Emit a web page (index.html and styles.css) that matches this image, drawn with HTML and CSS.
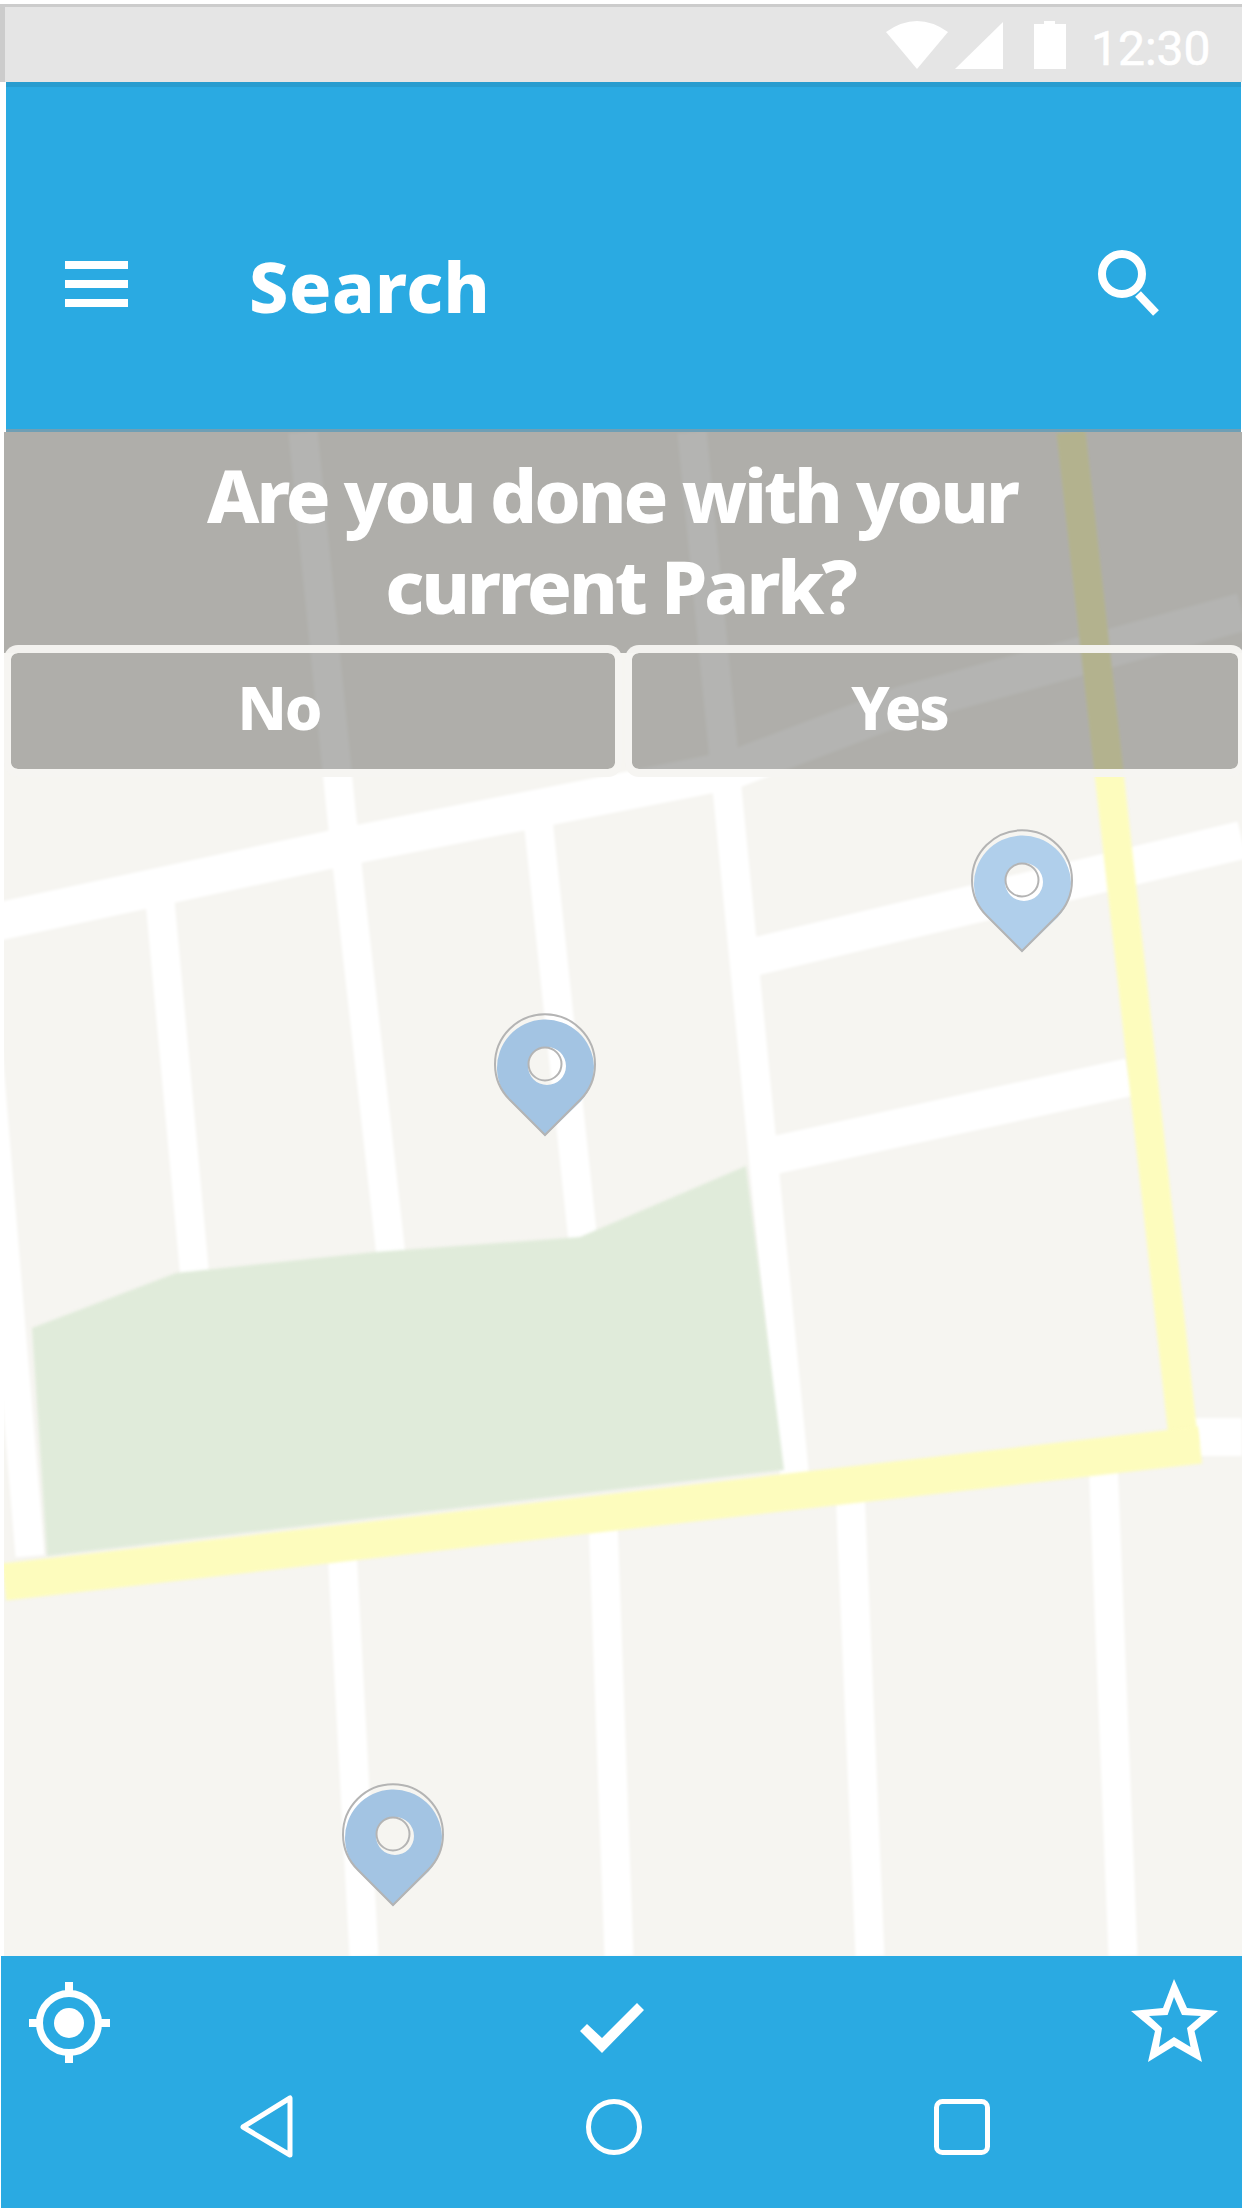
FILE: index.html
```html
<!DOCTYPE html>
<html lang="en">
  <head>
    <meta charset="UTF-8" />
    <meta name="viewport" content="width=device-width, initial-scale=1.0" />
    <title>Search</title>
    <link rel="stylesheet" href="styles.css">
  </head>

  <body>
    <div id="statusBar">
      <svg class="statusIcons" viewBox="886 21 180 48">
        <path d="M917 69 L886 32 Q917 10 948 32 Z" />
        <path d="M955 69 L1003 22 V69 Z" />
        <path d="M1034 24 H1044 V21 H1055 V24 H1066 V69 H1034 Z" />
      </svg>
      <span class="clock">12:30</span>
    </div>

    <header id="appBar">
      <div class="hamburger"><i></i><i></i><i></i></div>
      <h1 class="appTitle">Search</h1>
      <svg class="searchIcon" viewBox="1095 245 68 72">
        <circle cx="1122" cy="274" r="20" />
        <path d="M1138 294 L1156 313" />
      </svg>
    </header>

    <main id="mapContainer">
      <svg class="mapBase" viewBox="4 432 1238 1524">
        <rect x="4" y="432" width="1238" height="1524" fill="#f6f5f1" />
        <g class="roads">
          <path class="wide" d="M-4 922 L338 848 L732 770 L903 705 L1242 612" />
          <path class="wide" d="M753 957 L1242 840" />
          <path class="wide" d="M775 1155 L1130 1077" />
          <path class="wide" d="M1190 1437 H1242" />
          <path d="M-21 945 L30 1556" />
          <path d="M160 901 L197 1300" />
          <path d="M303 432 L341 810 L396 1300" />
          <path d="M537 810 L585 1260" />
          <path d="M692 432 L795 1480" />
          <path d="M342 1550 L364 1956" />
          <path d="M603 1520 L619 1956" />
          <path d="M850 1490 L870 1956" />
          <path d="M1103 1460 L1123 1956" />
        </g>
        <path class="park" d="M32 1328 L176 1273 L375 1252 L580 1237 L746 1166 L784 1470 L47 1556 Z" />
        <path class="highway" d="M1071 432 L1184 1445" />
        <path class="highway highwayWide" d="M4 1582 L1200 1445" />
      </svg>

      <section class="prompt">
        <p class="promptText">Are you done with your&nbsp;<br />current Park?</p>
        <div class="promptButtons">
          <button class="promptButton promptNo">No</button>
          <button class="promptButton promptYes">Yes</button>
        </div>
      </section>

      <svg class="pin pinA" viewBox="0 0 104 124">
        <path class="pinFill" fill-rule="evenodd" d="M20 91 A48.5 48.5 0 1 1 88 88 L52 123 Z M35 53 A19 19 0 1 0 73 53 A19 19 0 1 0 35 53 Z" />
        <path class="pinLine" d="M17 87 A50 50 0 1 1 87 87 L52 122 Z" />
        <circle class="pinLine" cx="52" cy="51" r="16.5" />
      </svg>
      <svg class="pin pinB" viewBox="0 0 104 124">
        <path class="pinFill" fill-rule="evenodd" d="M20 91 A48.5 48.5 0 1 1 88 88 L52 123 Z M35 53 A19 19 0 1 0 73 53 A19 19 0 1 0 35 53 Z" />
        <path class="pinLine" d="M17 87 A50 50 0 1 1 87 87 L52 122 Z" />
        <circle class="pinLine" cx="52" cy="51" r="16.5" />
      </svg>
      <svg class="pin pinC" viewBox="0 0 104 124">
        <path class="pinFill" fill-rule="evenodd" d="M20 91 A48.5 48.5 0 1 1 88 88 L52 123 Z M35 53 A19 19 0 1 0 73 53 A19 19 0 1 0 35 53 Z" />
        <path class="pinLine" d="M17 87 A50 50 0 1 1 87 87 L52 122 Z" />
        <circle class="pinLine" cx="52" cy="51" r="16.5" />
      </svg>
    </main>

    <footer id="bottomBar">
      <div class="actionRow">
        <svg class="locateIcon" viewBox="29 1979 81 84">
          <circle class="ring" cx="69" cy="2023" r="29.5" />
          <circle class="solid" cx="69" cy="2023" r="15" />
          <path class="solid" d="M65 1982 H73 V1992 H65 Z M65 2054 H73 V2063 H65 Z M29 2019 H38 V2027 H29 Z M101 2019 H110 V2027 H101 Z" />
        </svg>
        <svg class="checkIcon" viewBox="580 1979 64 84">
          <path class="solid" d="M580 2031 L587 2024 L602 2038 L637 2003 L644 2010 L602 2053 Z" />
        </svg>
        <svg class="starIcon" viewBox="1131 1979 87 84">
          <path class="solid" fill-rule="evenodd" d="M1174 1979 L1187 2008 L1218 2011 L1194.5 2031 L1202 2062 L1174 2046 L1148 2062 L1155 2031 L1131 2011 L1163 2008 Z M1174 1997 L1167.6 2015 L1149 2016 L1162 2028 L1159 2047 L1174 2037 L1190.5 2047 L1187 2028 L1201 2016 L1182 2015 Z" />
        </svg>
      </div>
      <div class="navRow">
        <svg class="backIcon" viewBox="238 2093 57 67">
          <path class="navLine" d="M243 2127 L290 2098 V2155 Z" />
        </svg>
        <svg class="homeIcon" viewBox="586 2100 56 56">
          <circle class="navLine" cx="614" cy="2128" r="25.5" />
        </svg>
        <svg class="recentIcon" viewBox="934 2100 56 56">
          <rect class="navLine" x="936.5" y="2102.5" width="51" height="51" rx="6" />
        </svg>
      </div>
    </footer>
  </body>
</html>
```

FILE: styles.css
```css
* {
  box-sizing: border-box;
}

body {
  margin: 0;
  width: 1242px;
  height: 2208px;
  overflow: hidden;
  display: flex;
  flex-direction: column;
  background-color: #fff;
  font-family: "Noto Sans", sans-serif;
  color: #fff;
}

#statusBar {
  margin-top: 4px;
  height: 78px;
  display: flex;
  align-items: flex-start;
  background-color: #e5e5e5;
  border-top: 3px solid #ccc;
  border-left: 5px solid #ccc;
  padding: 14px 0 0 881px;
}

.statusIcons {
  width: 180px;
  height: 48px;
  fill: #fff;
}

.clock {
  margin: 0 0 0 25px;
  font-family: Roboto, sans-serif;
  font-size: 48px;
  line-height: 55px;
  -webkit-text-stroke: 0.6px #fff;
}

#appBar {
  height: 350px;
  margin: 0 1px 0 6px;
  padding: 162px 0 0 59px;
  display: flex;
  align-items: flex-start;
  background-color: #2aaae2;
  border-top: 5px solid #279ccf;
  border-bottom: 3px solid #6f9fb5;
}

.hamburger {
  width: 63px;
  margin-top: 12px;
  display: flex;
  flex-direction: column;
  gap: 11px;
}

.hamburger i {
  display: block;
  height: 8px;
  background-color: #fff;
}

.appTitle {
  margin: -10px 0 0 121px;
  font-size: 70px;
  font-weight: 800;
  letter-spacing: 0.5px;
  line-height: 95px;
}

.searchIcon {
  width: 68px;
  height: 72px;
  margin: -4px 0 0 auto;
  margin-right: 78px;
  fill: none;
  stroke: #fff;
  stroke-width: 8;
}

#mapContainer {
  position: relative;
  flex: 1;
  margin-left: 4px;
}

.mapBase {
  position: absolute;
  top: 0;
  left: 0;
  width: 1238px;
  height: 1524px;
}

.roads,
.park,
.highway {
  filter: blur(1.5px);
}

.roads path {
  fill: none;
  stroke: #fff;
  stroke-width: 29;
}

.roads .wide {
  stroke-width: 38;
}

.park {
  fill: #e0ebda;
}

.highway {
  fill: none;
  stroke: #fdfcbd;
  stroke-width: 29;
}

.highwayWide {
  stroke-width: 37;
}

.prompt {
  position: relative;
}

.promptText {
  margin: 0 0 -8px;
  height: 221px;
  padding: 17px 6px 0 0;
  background-color: rgba(89, 89, 84, 0.45);
  text-align: center;
  font-size: 74px;
  font-weight: 800;
  letter-spacing: -3px;
  line-height: 91px;
}

.promptButtons {
  display: flex;
  gap: 3px;
}

.promptButton {
  height: 132px;
  border: 8px solid rgba(246, 245, 241, 0.96);
  border-width: 8px 7px;
  border-radius: 14px;
  background-color: rgba(89, 89, 84, 0.45);
  background-clip: padding-box;
  color: #fff;
  font-family: inherit;
  font-size: 60px;
  font-weight: 800;
  letter-spacing: -2px;
  padding: 0 68px 8px 0;
}

.promptNo {
  width: 618px;
  flex: none;
}

.promptYes {
  width: 620px;
  flex: none;
  padding-right: 71px;
}

.pin {
  position: absolute;
  width: 104px;
  height: 124px;
}

.pinA {
  left: 966px;
  top: 397px;
}

.pinB {
  left: 489px;
  top: 581px;
}

.pinC {
  left: 337px;
  top: 1351px;
}

.pinFill {
  fill: #a3c4e3;
}

.pinA .pinFill {
  fill: #b0cfeb;
}

.pinLine {
  fill: none;
  stroke: #b4b4b4;
  stroke-width: 2;
}

#bottomBar {
  height: 252px;
  margin-left: 1px;
  padding: 23px 0 0 28px;
  background-color: #2aaae2;
}

.actionRow {
  display: flex;
  height: 84px;
}

.actionRow svg,
.navRow svg {
  flex: none;
}

.locateIcon {
  width: 81px;
  height: 84px;
}

.checkIcon {
  width: 64px;
  height: 84px;
  margin-left: 470px;
}

.starIcon {
  width: 87px;
  height: 84px;
  margin-left: 487px;
}

.ring {
  fill: none;
  stroke: #fff;
  stroke-width: 7;
}

.solid {
  fill: #fff;
}

.navRow {
  display: flex;
  align-items: center;
  height: 67px;
  margin-top: 30px;
  padding-left: 209px;
}

.backIcon {
  width: 57px;
  height: 67px;
}

.homeIcon {
  width: 56px;
  height: 56px;
  margin-left: 291px;
}

.recentIcon {
  width: 56px;
  height: 56px;
  margin-left: 292px;
}

.navLine {
  fill: none;
  stroke: #fff;
  stroke-width: 5;
  stroke-linejoin: round;
}
```
